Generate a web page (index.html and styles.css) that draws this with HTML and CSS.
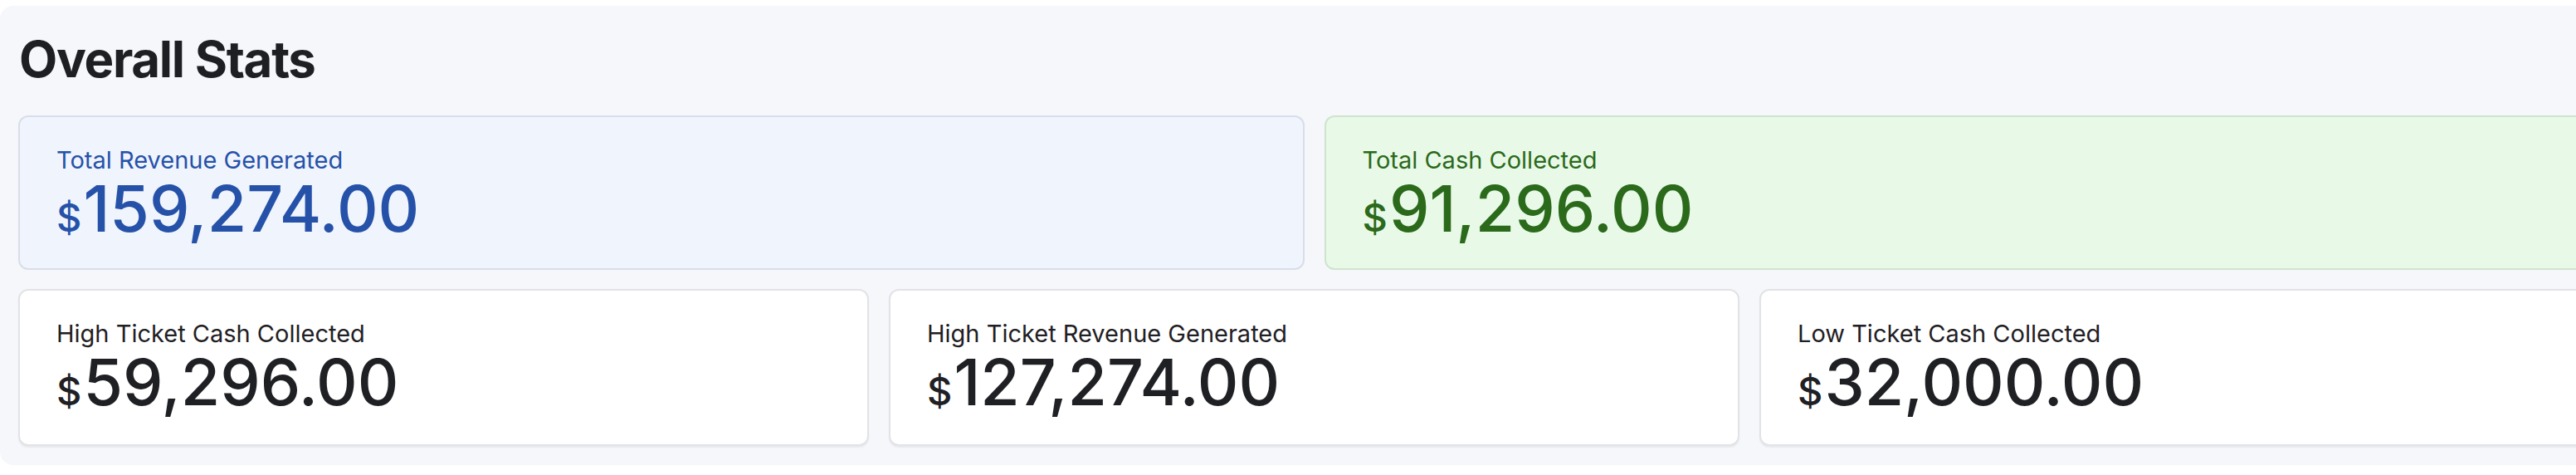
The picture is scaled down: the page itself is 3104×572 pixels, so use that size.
FILE: index.html
```html
<!DOCTYPE html>
<html lang="en">
<head>
<meta charset="utf-8">
<title>Overall Stats</title>
<link rel="stylesheet" href="styles.css">
</head>
<body>
<section class="panel">
  <h1 class="panel-title">Overall Stats</h1>
  <div class="row row-two">
    <div class="card card-blue">
      <div class="card-label">Total Revenue Generated</div>
      <div class="card-value"><span class="currency">$</span>159,274.00</div>
    </div>
    <div class="card card-green">
      <div class="card-label">Total Cash Collected</div>
      <div class="card-value"><span class="currency">$</span>91,296.00</div>
    </div>
  </div>
  <div class="row row-three">
    <div class="card card-white">
      <div class="card-label">High Ticket Cash Collected</div>
      <div class="card-value"><span class="currency">$</span>59,296.00</div>
    </div>
    <div class="card card-white">
      <div class="card-label">High Ticket Revenue Generated</div>
      <div class="card-value"><span class="currency">$</span>127,274.00</div>
    </div>
    <div class="card card-white">
      <div class="card-label">Low Ticket Cash Collected</div>
      <div class="card-value"><span class="currency">$</span>32,000.00</div>
    </div>
  </div>
</section>
</body>
</html>
```

FILE: styles.css
```css
html, body {
  margin: 0;
  padding: 0;
  background: #ffffff;
  overflow: hidden;
}

body {
  font-family: Inter, "Noto Sans", "Liberation Sans", sans-serif;
  color: #1f2024;
}

.panel {
  margin-top: 7px;
  width: 3167px;
  box-sizing: border-box;
  padding: 28px 22px 23px 22px;
  background: #f6f7fa;
  border-radius: 16px;
}

.panel-title {
  margin: 0 0 32px 1px;
  font-size: 60px;
  line-height: 72px;
  font-weight: 700;
  color: #1e1f22;
  letter-spacing: -1.3px;
}

.row {
  display: grid;
  gap: 24px;
}

.row-two {
  grid-template-columns: 1fr 1fr;
  margin-bottom: 23px;
}

.row-three {
  grid-template-columns: 1fr 1fr 1fr;
}

.card {
  border: 2px solid #e1e2e6;
  border-radius: 12px;
  padding: 32px 44px 34px 44px;
  box-sizing: border-box;
}

.card-blue {
  background: #f0f4fd;
  border-color: #d8dee9;
  color: #2552a8;
}

.card-green {
  background: #e8f9e8;
  border-color: #cfe3cf;
  color: #2b6a1b;
}

.card-white {
  background: #ffffff;
  border-color: #e2e3e7;
  box-shadow: 0 2px 2px rgba(0, 0, 0, 0.06);
  color: #1f2024;
  padding-bottom: 37px;
}

.card-label {
  font-size: 29px;
  line-height: 40px;
  font-weight: 400;
}

.card-value {
  font-size: 77px;
  line-height: 76px;
  font-weight: 500;
}

.currency {
  font-size: 47px;
  line-height: 1;
  margin-right: 2px;
}
```
